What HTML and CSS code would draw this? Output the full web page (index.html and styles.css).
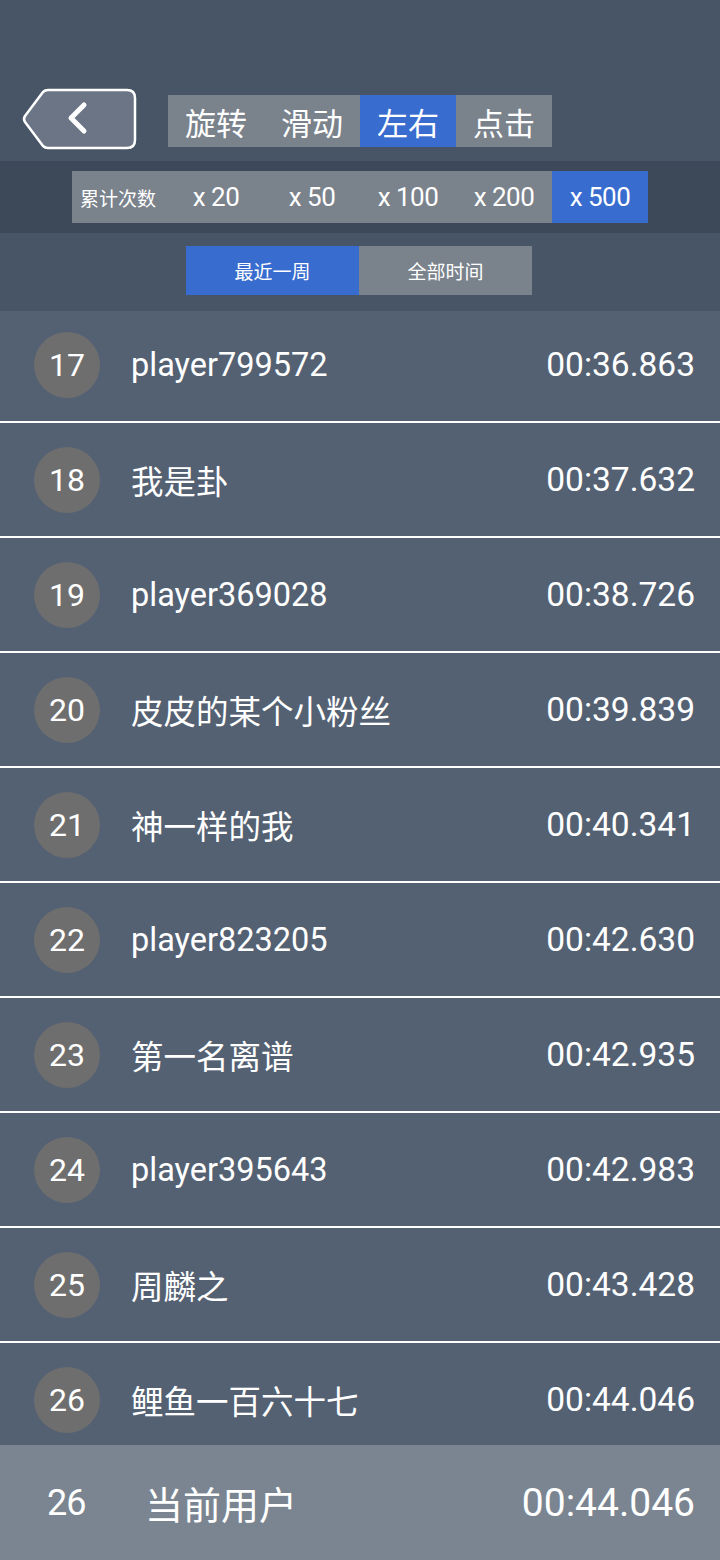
FILE: index.html
```html
<!DOCTYPE html>
<html lang="zh-CN">
  <head>
    <meta charset="UTF-8" />
    <meta name="viewport" content="width=device-width, initial-scale=1.0" />
    <title>排行榜</title>
    <link rel="stylesheet" href="styles.css">
  </head>
  <body>
    <div class="screen">
      <div class="top-bar">
        <button class="back-btn" aria-label="返回">
          <svg width="116" height="62" viewBox="0 0 116 62">
            <path d="M27 2 H106 Q114 2 114 10 V52 Q114 60 106 60 H27 Q24 60 22 58 L4 34 Q2 31 4 28 L22 4 Q24 2 27 2 Z"
                  fill="#6b7585" stroke="#fff" stroke-width="2.5" stroke-linejoin="round" />
            <path d="M63 17 L50 30 L63 43" fill="none" stroke="#fff" stroke-width="5"
                  stroke-linecap="round" stroke-linejoin="round" />
          </svg>
        </button>
        <div class="mode-tabs">
          <div class="mode-tab">旋转</div>
          <div class="mode-tab">滑动</div>
          <div class="mode-tab active">左右</div>
          <div class="mode-tab">点击</div>
        </div>
      </div>

      <div class="count-band">
        <div class="count-seg">
          <div class="count-cell label">累计次数</div>
          <div class="count-cell">x 20</div>
          <div class="count-cell">x 50</div>
          <div class="count-cell">x 100</div>
          <div class="count-cell">x 200</div>
          <div class="count-cell active">x 500</div>
        </div>
      </div>

      <div class="range-band">
        <div class="range-toggle">
          <div class="range-opt active">最近一周</div>
          <div class="range-opt">全部时间</div>
        </div>
      </div>

      <div class="rank-list">
        <div class="rank-scroll" id="rankScroll"></div>
      </div>

      <div class="me-row">
        <span class="me-rank">26</span>
        <span class="me-name">当前用户</span>
        <span class="me-time">00:44.046</span>
      </div>
    </div>

    <script>
      const ranks = [
        [17, "player799572", "00:36.863"],
        [18, "我是卦", "00:37.632"],
        [19, "player369028", "00:38.726"],
        [20, "皮皮的某个小粉丝", "00:39.839"],
        [21, "神一样的我", "00:40.341"],
        [22, "player823205", "00:42.630"],
        [23, "第一名离谱", "00:42.935"],
        [24, "player395643", "00:42.983"],
        [25, "周麟之", "00:43.428"],
        [26, "鲤鱼一百六十七", "00:44.046"],
      ];

      const scroll = document.getElementById("rankScroll");
      scroll.innerHTML = ranks
        .map(
          ([n, name, time]) => `
        <div class="rank-row">
          <div class="rank-num">${n}</div>
          <div class="rank-name">${name}</div>
          <div class="rank-time">${time}</div>
        </div>`
        )
        .join("");
    </script>
  </body>
</html>
```

FILE: styles.css
```css
body {
  margin: 0;
  padding: 0;
  font-family: Roboto, "Noto Sans CJK SC", sans-serif;
  color: #fff;
  background: #485566;
}

.screen {
  width: 720px;
  height: 1560px;
  display: flex;
  flex-direction: column;
  overflow: hidden;
}

.top-bar {
  height: 161px;
  box-sizing: border-box;
  padding: 88px 0 0 21px;
  display: flex;
  align-items: flex-start;
  background: #485566;
}

.back-btn {
  width: 116px;
  height: 62px;
  padding: 0;
  border: none;
  background: transparent;
}

.back-btn svg {
  display: block;
}

.mode-tabs {
  display: flex;
  margin: 7px 0 0 31px;
}

.mode-tab {
  width: 96px;
  height: 52px;
  display: flex;
  align-items: center;
  justify-content: center;
  background: #7a828c;
  font-size: 31px;
}

.mode-tab.active {
  background: #386ccf;
}

.count-band {
  height: 72px;
  display: flex;
  align-items: center;
  justify-content: center;
  background: #3d4959;
}

.count-seg {
  display: flex;
  background: #7a828c;
}

.count-cell {
  width: 96px;
  height: 52px;
  display: flex;
  align-items: center;
  justify-content: center;
  font-size: 26px;
  letter-spacing: -0.5px;
}

.count-cell.label {
  font-size: 19px;
  letter-spacing: 0;
  justify-content: flex-start;
  padding-left: 8px;
  box-sizing: border-box;
}

.count-cell.active {
  background: #386ccf;
}

.range-band {
  height: 78px;
  display: flex;
  justify-content: center;
  padding-top: 13px;
  box-sizing: border-box;
  background: #485566;
}

.range-toggle {
  display: flex;
  height: 49px;
  margin-left: -2px;
}

.range-opt {
  width: 173px;
  display: flex;
  align-items: center;
  justify-content: center;
  background: #7a828c;
  font-size: 19px;
}

.range-opt.active {
  background: #386ccf;
}

.rank-list {
  flex: 1;
  overflow: hidden;
  background: #546173;
}

.rank-scroll {
  margin-top: -3px;
}

.rank-row {
  height: 113px;
  display: flex;
  align-items: center;
  border-bottom: 2px solid #fff;
  padding: 0 25px 0 34px;
}

.rank-num {
  width: 66px;
  height: 66px;
  border-radius: 50%;
  background: #6f6e6e;
  display: flex;
  align-items: center;
  justify-content: center;
  font-size: 32px;
  flex-shrink: 0;
}

.rank-name {
  flex: 1;
  margin-left: 31px;
  font-size: 32.5px;
}

.rank-time {
  font-size: 33.5px;
}

.me-row {
  height: 115px;
  flex-shrink: 0;
  display: flex;
  align-items: center;
  padding: 0 25px 0 47px;
  background: #7b8591;
}

.me-rank {
  width: 98px;
  font-size: 36px;
  letter-spacing: -1px;
}

.me-name {
  flex: 1;
  font-size: 38px;
}

.me-time {
  font-size: 39px;
}
```
